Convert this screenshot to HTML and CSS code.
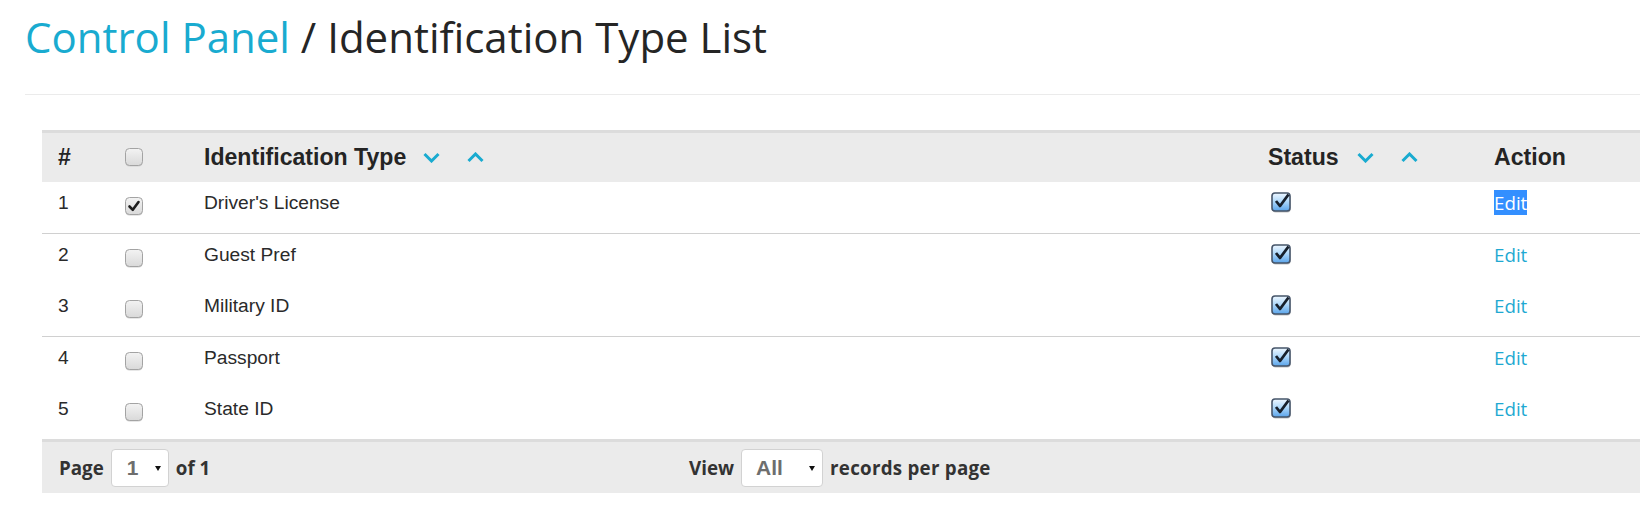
FILE: index.html
```html
<!DOCTYPE html>
<html lang="en">
<head>
<meta charset="utf-8">
<title>Identification Type List</title>
<link rel="stylesheet" href="styles.css">
</head>
<body>
<div class="page">
  <h1 class="title"><a class="crumb" href="#">Control Panel</a> / Identification Type List</h1>
  <div class="divider"></div>

  <div class="grid">
    <div class="row head">
      <div class="cell">#</div>
      <div class="cell"><svg class="cb" width="19" height="19" viewBox="0 0 19 19"><defs><linearGradient id="gh" x1="0" y1="0" x2="0" y2="1"><stop offset="0" stop-color="#f3f3f3"/><stop offset="1" stop-color="#d9d9d9"/></linearGradient></defs><rect x="0.5" y="1.5" width="17" height="17" rx="4" fill="#cfcfcf"/><rect x="0.5" y="0.5" width="17" height="17" rx="4" fill="url(#gh)" stroke="#a3a3a3"/></svg></div>
      <div class="cell"><span class="label">Identification Type</span><span class="sorts type-sorts"><svg width="17" height="11" viewBox="0 0 17 11"><polyline points="1.5,2 8.5,9 15.5,2" fill="none" stroke="#19abd0" stroke-width="3"/></svg><svg width="17" height="11" viewBox="0 0 17 11"><polyline points="1.5,9 8.5,2 15.5,9" fill="none" stroke="#19abd0" stroke-width="3"/></svg></span></div>
      <div class="cell"><span class="label">Status</span><span class="sorts status-sorts"><svg width="17" height="11" viewBox="0 0 17 11"><polyline points="1.5,2 8.5,9 15.5,2" fill="none" stroke="#19abd0" stroke-width="3"/></svg><svg width="17" height="11" viewBox="0 0 17 11"><polyline points="1.5,9 8.5,2 15.5,9" fill="none" stroke="#19abd0" stroke-width="3"/></svg></span></div>
      <div class="cell">Action</div>
    </div>

    <div class="row item sep">
      <div class="cell">1</div>
      <div class="cell"><svg class="cb rowcb" width="19" height="19" viewBox="0 0 19 19"><rect x="0.5" y="1.5" width="17" height="17" rx="4" fill="#cfcfcf"/><rect x="0.5" y="0.5" width="17" height="17" rx="4" fill="url(#gh)" stroke="#a3a3a3"/><path d="M4.5 9.5 L7.8 12.8 L13.5 5" fill="none" stroke="#1e1e1e" stroke-width="2.6" stroke-linecap="round" stroke-linejoin="round"/></svg></div>
      <div class="cell">Driver's License</div>
      <div class="cell"><svg class="st" width="23" height="23" viewBox="0 0 23 23"><defs><linearGradient id="gs" x1="0" y1="0" x2="0" y2="1"><stop offset="0" stop-color="#eef7ff"/><stop offset="0.45" stop-color="#b2dafb"/><stop offset="1" stop-color="#5aa4ea"/></linearGradient></defs><rect x="1.5" y="2.5" width="18" height="18" rx="3" fill="#9a9a9a" opacity="0.6"/><rect x="1" y="1" width="18" height="18" rx="3" fill="url(#gs)" stroke="#46556a" stroke-width="1.6"/><path d="M5 9 L9 14 L17.5 2.5" fill="none" stroke="#17202c" stroke-width="2.8" stroke-linejoin="round"/></svg></div>
      <div class="cell"><a class="edit selected" href="#">Edit</a></div>
    </div>

    <div class="row item">
      <div class="cell">2</div>
      <div class="cell"><svg class="cb rowcb" width="19" height="19" viewBox="0 0 19 19"><rect x="0.5" y="1.5" width="17" height="17" rx="4" fill="#cfcfcf"/><rect x="0.5" y="0.5" width="17" height="17" rx="4" fill="url(#gh)" stroke="#a3a3a3"/></svg></div>
      <div class="cell">Guest Pref</div>
      <div class="cell"><svg class="st" width="23" height="23" viewBox="0 0 23 23"><rect x="1.5" y="2.5" width="18" height="18" rx="3" fill="#9a9a9a" opacity="0.6"/><rect x="1" y="1" width="18" height="18" rx="3" fill="url(#gs)" stroke="#46556a" stroke-width="1.6"/><path d="M5 9 L9 14 L17.5 2.5" fill="none" stroke="#17202c" stroke-width="2.8" stroke-linejoin="round"/></svg></div>
      <div class="cell"><a class="edit" href="#">Edit</a></div>
    </div>

    <div class="row item sep">
      <div class="cell">3</div>
      <div class="cell"><svg class="cb rowcb" width="19" height="19" viewBox="0 0 19 19"><rect x="0.5" y="1.5" width="17" height="17" rx="4" fill="#cfcfcf"/><rect x="0.5" y="0.5" width="17" height="17" rx="4" fill="url(#gh)" stroke="#a3a3a3"/></svg></div>
      <div class="cell">Military ID</div>
      <div class="cell"><svg class="st" width="23" height="23" viewBox="0 0 23 23"><rect x="1.5" y="2.5" width="18" height="18" rx="3" fill="#9a9a9a" opacity="0.6"/><rect x="1" y="1" width="18" height="18" rx="3" fill="url(#gs)" stroke="#46556a" stroke-width="1.6"/><path d="M5 9 L9 14 L17.5 2.5" fill="none" stroke="#17202c" stroke-width="2.8" stroke-linejoin="round"/></svg></div>
      <div class="cell"><a class="edit" href="#">Edit</a></div>
    </div>

    <div class="row item">
      <div class="cell">4</div>
      <div class="cell"><svg class="cb rowcb" width="19" height="19" viewBox="0 0 19 19"><rect x="0.5" y="1.5" width="17" height="17" rx="4" fill="#cfcfcf"/><rect x="0.5" y="0.5" width="17" height="17" rx="4" fill="url(#gh)" stroke="#a3a3a3"/></svg></div>
      <div class="cell">Passport</div>
      <div class="cell"><svg class="st" width="23" height="23" viewBox="0 0 23 23"><rect x="1.5" y="2.5" width="18" height="18" rx="3" fill="#9a9a9a" opacity="0.6"/><rect x="1" y="1" width="18" height="18" rx="3" fill="url(#gs)" stroke="#46556a" stroke-width="1.6"/><path d="M5 9 L9 14 L17.5 2.5" fill="none" stroke="#17202c" stroke-width="2.8" stroke-linejoin="round"/></svg></div>
      <div class="cell"><a class="edit" href="#">Edit</a></div>
    </div>

    <div class="row item">
      <div class="cell">5</div>
      <div class="cell"><svg class="cb rowcb" width="19" height="19" viewBox="0 0 19 19"><rect x="0.5" y="1.5" width="17" height="17" rx="4" fill="#cfcfcf"/><rect x="0.5" y="0.5" width="17" height="17" rx="4" fill="url(#gh)" stroke="#a3a3a3"/></svg></div>
      <div class="cell">State ID</div>
      <div class="cell"><svg class="st" width="23" height="23" viewBox="0 0 23 23"><rect x="1.5" y="2.5" width="18" height="18" rx="3" fill="#9a9a9a" opacity="0.6"/><rect x="1" y="1" width="18" height="18" rx="3" fill="url(#gs)" stroke="#46556a" stroke-width="1.6"/><path d="M5 9 L9 14 L17.5 2.5" fill="none" stroke="#17202c" stroke-width="2.8" stroke-linejoin="round"/></svg></div>
      <div class="cell"><a class="edit" href="#">Edit</a></div>
    </div>

    <div class="foot">
      <div class="pager">
        <span>Page</span>
        <span class="select page-select"><span class="val">1</span><span class="caret"></span></span>
        <span>of 1</span>
      </div>
      <div class="pager">
        <span>View</span>
        <span class="select view-select"><span class="val">All</span><span class="caret"></span></span>
        <span class="wide">records per page</span>
      </div>
    </div>
  </div>
</div>
</body>
</html>
```

FILE: styles.css
```css
html, body {
  margin: 0;
  padding: 0;
  background: #ffffff;
}

body {
  width: 1640px;
  overflow: hidden;
  font-family: "Liberation Sans", Arial, sans-serif;
  color: #262626;
}

.page {
  padding-left: 25px;
}

.title {
  margin: 0;
  padding-top: 8px;
  font-family: "Open Sans", sans-serif;
  font-weight: 400;
  font-size: 42px;
  line-height: 57px;
  color: #252525;
  white-space: nowrap;
}

.crumb {
  color: #19abd0;
  text-decoration: none;
}

.divider {
  margin-top: 29px;
  height: 1px;
  background: #ebebeb;
}

.grid {
  margin-top: 35px;
  margin-left: 17px;
  width: 1598px;
}

.row {
  display: grid;
  grid-template-columns: 67px 79px 1064px 226px 162px;
}

.cell {
  padding: 0 16px;
  white-space: nowrap;
}

.head {
  height: 49px;
  align-items: center;
  background: #ebebeb;
  border-top: 3px solid #dcdcdc;
  font-weight: 700;
  font-size: 23.1px;
  color: #242424;
}

.head .cell {
  display: flex;
  align-items: center;
}

.cb {
  display: block;
}

.sorts {
  display: inline-flex;
  align-items: center;
  gap: 27px;
}

.type-sorts {
  margin-left: 17px;
}

.status-sorts {
  margin-left: 18px;
}

.sorts svg {
  display: block;
}

.item {
  height: 51px;
  align-items: start;
  font-size: 19.2px;
  line-height: 22px;
  color: #2a2a2a;
}

.item .cell {
  padding-top: 10px;
}

.sep {
  border-bottom: 1px solid #d0d0d0;
}

.rowcb {
  margin-top: 5px;
}

.st {
  display: block;
  margin-left: 3px;
}

.edit {
  font-family: "Open Sans", sans-serif;
  font-size: 18.75px;
  color: #1fa9d2;
  text-decoration: none;
}

.edit.selected {
  background: #338fff;
  color: #ffffff;
}

.foot {
  display: grid;
  grid-template-columns: 630px 1fr;
  height: 51px;
  align-items: center;
  background: #ebebeb;
  border-top: 3px solid #dcdcdc;
}

.pager {
  display: flex;
  align-items: center;
  gap: 7px;
  padding-left: 17px;
  font-family: "Open Sans", sans-serif;
  font-weight: 700;
  font-size: 18.75px;
  color: #333333;
}

.pager .wide {
  letter-spacing: 0.25px;
}

.select {
  position: relative;
  display: flex;
  align-items: center;
  box-sizing: border-box;
  height: 38px;
  background: #ffffff;
  border: 1px solid #d2d2d2;
  border-radius: 4px;
  font-family: "Liberation Sans", Arial, sans-serif;
  font-size: 21px;
  font-weight: 700;
  color: #6e6e6e;
}

.page-select {
  width: 58px;
  padding-left: 15px;
}

.view-select {
  width: 82px;
  padding-left: 14px;
}

.caret {
  position: absolute;
  top: 16px;
  right: 7px;
  width: 0;
  height: 0;
  border-top: 5px solid #111111;
  border-left: 3px solid transparent;
  border-right: 3px solid transparent;
}
```
